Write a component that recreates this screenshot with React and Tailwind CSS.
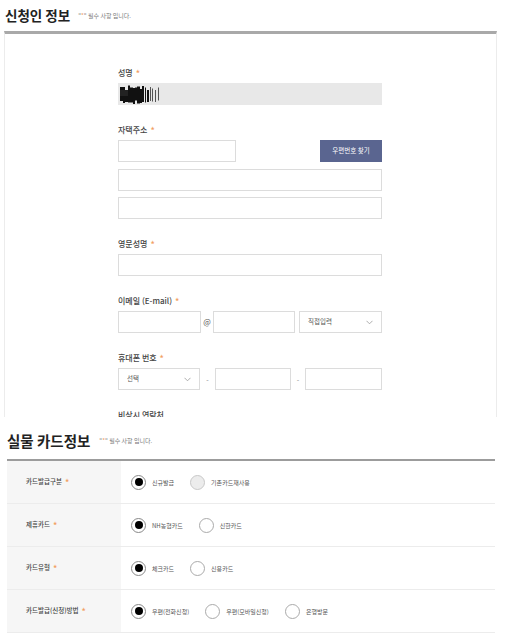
import React from 'react';

const font = { fontFamily: '"Noto Sans CJK KR", "Noto Sans", sans-serif' };

const Star = () => <span className="text-[#f2a063] ml-[3px] text-[9px] leading-none">*</span>;

const Label = ({ children }) => (
  <div className="h-[12px] mb-[4px] flex items-center text-[8px] text-[#444] font-medium">
    {children}
    <Star />
  </div>
);

const Input = ({ className = '', children }) => (
  <div className={`h-[22px] border border-[#dcdcdc] bg-white ${className}`}>{children}</div>
);

const Chevron = () => (
  <svg width="7" height="5" viewBox="0 0 7 5" className="text-[#999]">
    <path d="M0.5 0.8 L3.5 3.8 L6.5 0.8" fill="none" stroke="currentColor" strokeWidth="0.8" />
  </svg>
);

const FakeSelect = ({ label, className = '' }) => (
  <Input className={`flex items-center justify-between px-[8px] ${className}`}>
    <span className="text-[6.5px] text-[#555]">{label}</span>
    <Chevron />
  </Input>
);

// 가림 처리된 이름
const Scribble = () => {
  const bars = [
    [1, 3, 14], [4, 2, 16], [6, 3, 12], [9, 2, 17], [11, 3, 15], [14, 2, 16],
    [16, 2, 13], [18, 3, 17], [21, 2, 14], [23, 2, 16], [26, 1, 15], [28, 2, 12],
    [31, 1, 14], [33, 1, 13], [36, 1, 12], [39, 1, 13],
  ];
  return (
    <svg width="42" height="20" viewBox="0 0 42 20">
      {bars.map(([x, w, h], i) => (
        <rect key={i} x={x} y={(20 - h) / 2 + (i % 3)} width={w} height={h} fill={i > 11 ? '#555' : '#111'} />
      ))}
      <rect x="1" y="6" width="8" height="6" fill="#222" />
    </svg>
  );
};

const Field = ({ label, children }) => (
  <div className="mb-[19px]">
    <Label>{label}</Label>
    {children}
  </div>
);

const Radio = ({ checked, disabled, label }) => (
  <div className="flex items-center mr-[16px]">
    <div
      className={`w-[15px] h-[15px] rounded-full border flex items-center justify-center ${
        checked ? 'border-[#888] bg-white' : disabled ? 'border-[#c8c8c8] bg-[#ececec]' : 'border-[#aaa] bg-white'
      }`}
    >
      {checked && <div className="w-[8px] h-[8px] rounded-full bg-black" />}
    </div>
    <span className="ml-[6px] text-[6px] text-[#555]">{label}</span>
  </div>
);

const Note = ({ className = '' }) => (
  <span className={`text-[6px] text-[#777] ${className}`}>
    "<span className="text-[#f2a063]">*</span>" 필수 사항 입니다.
  </span>
);

const rows = [
  { label: '카드발급구분', options: [{ label: '신규발급', checked: true }, { label: '기존카드재사용', disabled: true }] },
  { label: '제휴카드', options: [{ label: 'NH농협카드', checked: true }, { label: '신한카드' }] },
  { label: '카드유형', options: [{ label: '체크카드', checked: true }, { label: '신용카드' }] },
  {
    label: '카드발급(신청)방법',
    options: [{ label: '우편(전화신청)', checked: true }, { label: '우편(모바일신청)' }, { label: '은행방문' }],
  },
];

export default function App() {
  return (
    <div className="w-[506px] h-[635px] bg-white overflow-hidden text-[#333]" style={font}>
      {/* 신청인 정보 */}
      <div className="h-[417px] overflow-hidden">
        <div className="h-[31px] flex items-center pl-[5px]">
          <h2 className="text-[13.5px] font-bold text-[#222]">신청인 정보</h2>
          <Note className="ml-[8px]" />
        </div>
        <div className="mx-[4px] w-[493px] border-t-[3px] border-t-[#a9a9a9] border-x border-x-[#ececec] h-[400px] pt-[33px] pl-[113px]">
          <div className="w-[264px]">
            <Field label="성명">
              <div className="h-[22px] bg-[#e8e8e8] flex items-center pl-[1px]">
                <Scribble />
              </div>
            </Field>

            <Field label="자택주소">
              <div className="flex justify-between mb-[7px]">
                <Input className="w-[118px]" />
                <div className="w-[62px] h-[22px] bg-[#5a6590] flex items-center justify-center text-white text-[6.5px]">
                  우편번호 찾기
                </div>
              </div>
              <Input className="mb-[6px]" />
              <Input />
            </Field>

            <Field label="영문성명">
              <Input />
            </Field>

            <Field label="이메일 (E-mail)">
              <div className="flex items-center">
                <Input className="w-[83px]" />
                <span className="w-[12px] text-center text-[8px] text-[#555]">@</span>
                <Input className="w-[82px]" />
                <FakeSelect label="직접입력" className="w-[83px] ml-[4px]" />
              </div>
            </Field>

            <Field label="휴대폰 번호">
              <div className="flex items-center">
                <FakeSelect label="선택" className="w-[82px]" />
                <span className="w-[15px] text-center text-[7px] text-[#888]">-</span>
                <Input className="w-[76px]" />
                <span className="w-[14px] text-center text-[7px] text-[#888]">-</span>
                <Input className="w-[77px]" />
              </div>
            </Field>

            <div className="mt-[2px] text-[8px] font-medium text-[#444]">비상시 연락처</div>
          </div>
        </div>
      </div>

      {/* 실물 카드정보 */}
      <div className="px-[7px] pt-[5px]">
        <div className="h-[37px] flex items-center">
          <h2 className="text-[14.5px] font-bold text-[#222]">실물 카드정보</h2>
          <Note className="ml-[9px]" />
        </div>
        <div className="w-[488px] border-t-[2px] border-t-[#9c9c9c]">
          {rows.map((row) => (
            <div key={row.label} className="flex h-[43px] border-b border-b-[#ececec]">
              <div className="w-[114px] bg-[#f6f6f6] flex items-center pl-[19px] text-[6.5px] font-medium text-[#444]">
                {row.label}
                <Star />
              </div>
              <div className="flex items-center pl-[10px]">
                {row.options.map((o) => (
                  <Radio key={o.label} {...o} />
                ))}
              </div>
            </div>
          ))}
        </div>
      </div>
    </div>
  );
}
